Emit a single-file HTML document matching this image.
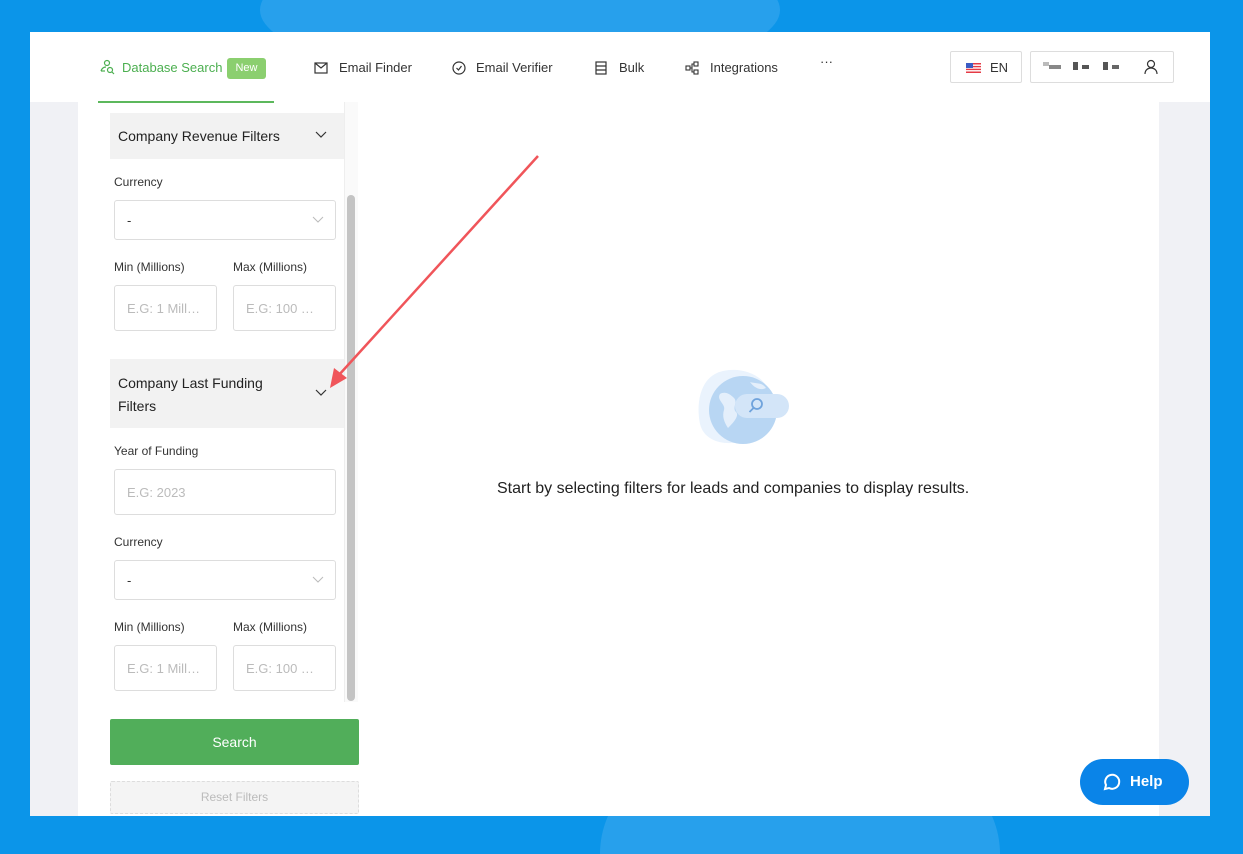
<!DOCTYPE html>
<html style="width:1243px;height:854px;overflow:hidden"><head><meta charset="utf-8"><style>
*{box-sizing:border-box;margin:0;padding:0}
body{width:1243px;height:854px;overflow:hidden;background:#0b95e9;font-family:"Liberation Sans",sans-serif;position:relative;color:#222}
.abs{position:absolute}
.app{left:30px;top:32px;width:1180px;height:784px;background:#fff;overflow:hidden}
.nav{font-size:13px;color:#333;top:60px}
.lbl{font-size:12px;color:#333}
.inp{border:1px solid #ddd;border-radius:3px;background:#fff;font-size:13px;color:#bbb;padding-left:12px;display:flex;align-items:center}
.hdr{background:#f2f2f2;font-size:14px;color:#222;padding-left:8px}
</style></head><body>
<div class="abs" style="left:0;top:0;width:1243px;height:854px;overflow:hidden">
<div class="abs" style="left:260px;top:-60px;width:520px;height:140px;border-radius:50%;background:#3aa8ef;opacity:.6"></div>
<div class="abs" style="left:600px;top:760px;width:400px;height:94px;border-radius:200px 200px 0 0;background:#3aa8ef;opacity:.6"></div>
</div>
<div class="app abs">
  <div class="abs" style="left:0;top:70px;width:48px;height:714px;background:#f0f1f5"></div>
  <div class="abs" style="left:1129px;top:70px;width:51px;height:714px;background:#f0f1f5"></div>
  <svg class="abs" style="left:70px;top:27px" width="16" height="16" viewBox="0 0 16 16" fill="none" stroke="#4caf50" stroke-width="1.2"><circle cx="7" cy="4" r="2.5"/><path d="M1 12c1-3 3-4 5-4"/><circle cx="10" cy="11" r="2.5"/><path d="M12 13l2 2"/><path d="M1 12h4"/></svg>
  <div class="abs nav" style="left:92px;top:28px;color:#4caf50">Database Search</div>
  <div class="abs" style="left:197px;top:26px;width:39px;height:21px;background:#8bcf6f;border-radius:3px;color:#fff;font-size:11px;text-align:center;line-height:21px">New</div>
  <div class="abs" style="left:68px;top:69px;width:176px;height:2px;background:#5cb85c"></div>
  <svg class="abs" style="left:284px;top:30px" width="14" height="12" viewBox="0 0 14 12" fill="none" stroke="#333" stroke-width="1.2"><rect x="1" y="1" width="12" height="10"/><path d="M1 1l6 5 6-5"/></svg>
  <div class="abs nav" style="left:309px;top:28px">Email Finder</div>
  <svg class="abs" style="left:422px;top:29px" width="14" height="14" viewBox="0 0 14 14" fill="none" stroke="#333" stroke-width="1.2"><circle cx="7" cy="7" r="6"/><path d="M4.5 7l2 2 3-4"/></svg>
  <div class="abs nav" style="left:446px;top:28px">Email Verifier</div>
  <svg class="abs" style="left:565px;top:29px" width="12" height="14" viewBox="0 0 12 14" fill="none" stroke="#333" stroke-width="1.2"><rect x="1" y="1" width="10" height="12"/><path d="M1 5h10M1 9h10"/></svg>
  <div class="abs nav" style="left:589px;top:28px">Bulk</div>
  <svg class="abs" style="left:655px;top:29px" width="14" height="14" viewBox="0 0 14 14" fill="none" stroke="#333" stroke-width="1.1"><rect x="1" y="5" width="4" height="4"/><rect x="9" y="1" width="4" height="4"/><rect x="9" y="9" width="4" height="4"/><path d="M5 7h2v-4h2M7 7v4h2"/></svg>
  <div class="abs nav" style="left:680px;top:28px">Integrations</div>
  <div class="abs nav" style="left:790px;top:22px">···</div>
  <div class="abs" style="left:920px;top:19px;width:72px;height:32px;border:1px solid #ddd;border-radius:2px"></div>
  <svg class="abs" style="left:936px;top:31px" width="15" height="10" viewBox="0 0 15 10"><rect width="15" height="10" fill="#e53a45"/><rect y="1.5" width="15" height="1.4" fill="#fff"/><rect y="4.3" width="15" height="1.4" fill="#fff"/><rect y="7.1" width="15" height="1.4" fill="#fff"/><rect width="7" height="5" fill="#3b5cc4"/></svg>
  <div class="abs nav" style="left:960px;top:28px">EN</div>
  <div class="abs" style="left:1000px;top:19px;width:144px;height:32px;border:1px solid #ddd;border-radius:2px"></div>
  <div class="abs" style="left:1013px;top:30px;width:6px;height:4px;background:#bbb"></div>
  <div class="abs" style="left:1019px;top:33px;width:12px;height:4px;background:#888"></div>
  <div class="abs" style="left:1043px;top:30px;width:5px;height:8px;background:#555"></div>
  <div class="abs" style="left:1052px;top:33px;width:7px;height:4px;background:#555"></div>
  <div class="abs" style="left:1073px;top:30px;width:5px;height:8px;background:#555"></div>
  <div class="abs" style="left:1082px;top:33px;width:7px;height:4px;background:#666"></div>
  <svg class="abs" style="left:1114px;top:27px" width="14" height="16" viewBox="0 0 14 16" fill="none" stroke="#333" stroke-width="1.2"><circle cx="7" cy="5" r="3.5"/><path d="M1 15c0-4 3-6 6-6s6 2 6 6"/></svg>
  <div class="abs" style="left:314px;top:70px;width:14px;height:600px;background:#fafafa;border-left:1px solid #eee"></div>
  <div class="abs" style="left:317px;top:163px;width:8px;height:506px;background:#c4c4c4;border-radius:4px"></div>
  <div class="abs hdr" style="left:80px;top:81px;width:234px;height:46px;line-height:46px">Company Revenue Filters</div>
  <svg class="abs" style="left:285px;top:99px" width="12" height="8" viewBox="0 0 12 8" fill="none" stroke="#333" stroke-width="1.2"><path d="M1 1l5 5 5-5"/></svg>
  <div class="abs lbl" style="left:84px;top:143px">Currency</div>
  <div class="abs inp" style="left:84px;top:168px;width:222px;height:40px;color:#333">-</div>
  <svg class="abs" style="left:282px;top:184px" width="12" height="8" viewBox="0 0 12 8" fill="none" stroke="#bbb" stroke-width="1"><path d="M1 1l5 5 5-5"/></svg>
  <div class="abs lbl" style="left:84px;top:228px">Min (Millions)</div>
  <div class="abs lbl" style="left:203px;top:228px">Max (Millions)</div>
  <div class="abs inp" style="left:84px;top:253px;width:103px;height:46px">E.G: 1 Mill…</div>
  <div class="abs inp" style="left:203px;top:253px;width:103px;height:46px">E.G: 100 …</div>
  <div class="abs hdr" style="left:80px;top:327px;width:234px;height:69px;padding-top:13px;line-height:23px">Company Last Funding<br>Filters</div>
  <svg class="abs" style="left:285px;top:357px" width="12" height="8" viewBox="0 0 12 8" fill="none" stroke="#333" stroke-width="1.2"><path d="M1 1l5 5 5-5"/></svg>
  <div class="abs lbl" style="left:84px;top:412px">Year of Funding</div>
  <div class="abs inp" style="left:84px;top:437px;width:222px;height:46px">E.G: 2023</div>
  <div class="abs lbl" style="left:84px;top:503px">Currency</div>
  <div class="abs inp" style="left:84px;top:528px;width:222px;height:40px;color:#333">-</div>
  <svg class="abs" style="left:282px;top:544px" width="12" height="8" viewBox="0 0 12 8" fill="none" stroke="#bbb" stroke-width="1"><path d="M1 1l5 5 5-5"/></svg>
  <div class="abs lbl" style="left:84px;top:588px">Min (Millions)</div>
  <div class="abs lbl" style="left:203px;top:588px">Max (Millions)</div>
  <div class="abs inp" style="left:84px;top:613px;width:103px;height:46px">E.G: 1 Mill…</div>
  <div class="abs inp" style="left:203px;top:613px;width:103px;height:46px">E.G: 100 …</div>
  <div class="abs" style="left:80px;top:687px;width:249px;height:46px;background:#51ae5a;border-radius:2px;color:#fff;font-size:14px;text-align:center;line-height:46px">Search</div>
  <div class="abs" style="left:80px;top:749px;width:249px;height:33px;background:#f4f4f4;border:1px dashed #ddd;border-radius:2px;color:#bbb;font-size:12px;text-align:center;line-height:31px">Reset Filters</div>
  <svg class="abs" style="left:665px;top:332px" width="100" height="90" viewBox="0 0 100 90">
    <path d="M20 10c15-8 40-4 50 10 10 15 5 45-15 55-20 8-45 5-50-15-4-20 0-42 15-50z" fill="#eaf3fd"/>
    <circle cx="48" cy="46" r="34" fill="#b8d6f3"/>
    <path d="M25 30c5-3 10 0 14 4s-2 10 2 14-4 12-8 16c-4-6-6-12-4-18s-8-10-4-16z" fill="#e4effb"/>
    <path d="M55 18c6 2 12 0 16 6-4 2-10 2-16-6z" fill="#e4effb"/>
    <rect x="40" y="30" width="54" height="24" rx="12" fill="#d3e5f8"/>
    <circle cx="62" cy="40" r="5" fill="none" stroke="#6fa3dc" stroke-width="1.8"/><path d="M58.5 44l-4 4" stroke="#6fa3dc" stroke-width="1.8"/>
  </svg>
  <div class="abs" style="left:467px;top:448px;font-size:16px;color:#222">Start by selecting filters for leads and companies to display results.</div>
</div>
<svg class="abs" style="left:0;top:0" width="1243" height="854"><line x1="538" y1="156" x2="338" y2="376" stroke="#f0555a" stroke-width="2.5"/><path d="M330 388l4-20 13 10z" fill="#f0555a"/></svg>
<div class="abs" style="left:1080px;top:759px;width:109px;height:46px;border-radius:23px;background:#0a84e8;color:#fff;font-weight:bold;font-size:15px">
  <svg class="abs" style="left:21px;top:13px" width="20" height="20" viewBox="0 0 20 20" fill="none" stroke="#fff" stroke-width="2"><path d="M4 17l1-4a7 7 0 1 1 3 3z"/></svg>
  <span class="abs" style="left:50px;top:14px">Help</span>
</div>
</body></html>
